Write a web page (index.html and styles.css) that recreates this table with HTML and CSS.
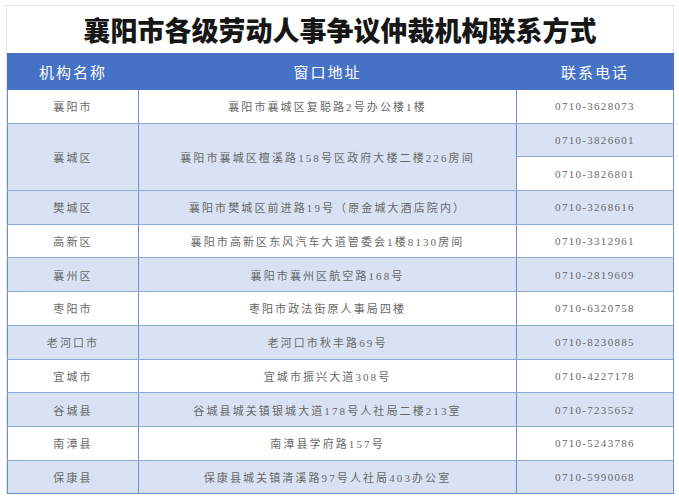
FILE: index.html
```html
<!DOCTYPE html>
<html lang="zh-CN">
<head>
<meta charset="utf-8">
<title>襄阳市各级劳动人事争议仲裁机构联系方式</title>
<link rel="stylesheet" href="styles.css">
</head>
<body>
<div class="sheet">
  <div class="title">襄阳市各级劳动人事争议仲裁机构联系方式</div>
  <table class="grid">
    <colgroup>
      <col class="c-name">
      <col class="c-addr">
      <col class="c-tel">
    </colgroup>
    <thead>
      <tr class="head">
        <th>机构名称</th>
        <th>窗口地址</th>
        <th>联系电话</th>
      </tr>
    </thead>
    <tbody>
      <tr class="r-white">
        <td>襄阳市</td>
        <td>襄阳市襄城区复聪路2号办公楼1楼</td>
        <td class="tel">0710-3628073</td>
      </tr>
      <tr class="r-blue">
        <td rowspan="2">襄城区</td>
        <td rowspan="2">襄阳市襄城区檀溪路158号区政府大楼二楼226房间</td>
        <td class="tel">0710-3826601</td>
      </tr>
      <tr class="r-white">
        <td class="tel">0710-3826801</td>
      </tr>
      <tr class="r-blue">
        <td>樊城区</td>
        <td>襄阳市樊城区前进路19号（原金城大酒店院内）</td>
        <td class="tel">0710-3268616</td>
      </tr>
      <tr class="r-white">
        <td>高新区</td>
        <td>襄阳市高新区东风汽车大道管委会1楼8130房间</td>
        <td class="tel">0710-3312961</td>
      </tr>
      <tr class="r-blue">
        <td>襄州区</td>
        <td>襄阳市襄州区航空路168号</td>
        <td class="tel">0710-2819609</td>
      </tr>
      <tr class="r-white">
        <td>枣阳市</td>
        <td>枣阳市政法街原人事局四楼</td>
        <td class="tel">0710-6320758</td>
      </tr>
      <tr class="r-blue">
        <td>老河口市</td>
        <td>老河口市秋丰路69号</td>
        <td class="tel">0710-8230885</td>
      </tr>
      <tr class="r-white">
        <td>宜城市</td>
        <td>宜城市振兴大道308号</td>
        <td class="tel">0710-4227178</td>
      </tr>
      <tr class="r-blue">
        <td>谷城县</td>
        <td>谷城县城关镇银城大道178号人社局二楼213室</td>
        <td class="tel">0710-7235652</td>
      </tr>
      <tr class="r-white">
        <td>南漳县</td>
        <td>南漳县学府路157号</td>
        <td class="tel">0710-5243786</td>
      </tr>
      <tr class="r-blue">
        <td>保康县</td>
        <td>保康县城关镇清溪路97号人社局403办公室</td>
        <td class="tel">0710-5990068</td>
      </tr>
    </tbody>
  </table>
</div>
</body>
</html>
```

FILE: styles.css
```css
html, body {
  margin: 0;
  padding: 0;
  background: #ffffff;
}

.sheet {
  margin: 5px 0 0 6px;
  width: 667px;
  border-top: 1px solid #e3e3e3;
  border-left: 1px solid #e3e3e3;
}

.title {
  height: 47px;
  display: flex;
  align-items: center;
  justify-content: center;
  font-family: "Noto Sans CJK SC", sans-serif;
  font-weight: 900;
  font-size: 27px;
  color: #161616;
  letter-spacing: 0;
  border-right: 1px solid #e3e3e3;
}

.grid {
  width: 666px;
  border-collapse: collapse;
  table-layout: fixed;
  font-family: "Liberation Serif", "Noto Sans CJK SC", serif;
  font-size: 11px;
  color: #686868;
}

.c-name { width: 131px; }
.c-addr { width: 378px; }
.c-tel { width: 157px; }

.head th {
  height: 35px;
  padding: 0;
  background: #4672c6;
  color: #ffffff;
  font-family: "Noto Sans CJK SC", sans-serif;
  font-weight: 400;
  font-size: 15px;
  letter-spacing: 2px;
  text-align: center;
  border: 1px solid #4672c6;
}

.grid td {
  height: 32.7px;
  padding: 0;
  text-align: center;
  letter-spacing: 2.1px;
  border-top: 1px solid #8eaadb;
  border-bottom: 1px solid #8eaadb;
  border-left: 1px solid #6f8ecf;
  border-right: 1px solid #6f8ecf;
}

.grid td.tel {
  letter-spacing: 1.3px;
}

.r-white td { background: #ffffff; }
.r-blue td { background: #d9e2f3; }

.grid tbody tr:last-child td {
  border-bottom: 1px solid #6f8ecf;
}
```
